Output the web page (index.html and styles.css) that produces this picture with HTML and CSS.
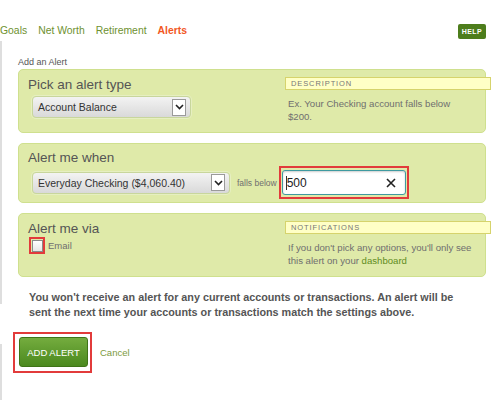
FILE: index.html
```html
<!DOCTYPE html>
<html lang="en">
<head>
    <meta charset="UTF-8">
    <meta name="viewport" content="width=device-width, initial-scale=1.0">
    <title>Alerts</title>
    <link rel="stylesheet" href="styles.css">
</head>
<body>

    <!-- Tabs -->
    <div class="header">
        <nav class="tabs">
            <a href="#">Goals</a>
            <a href="#">Net Worth</a>
            <a href="#">Retirement</a>
            <a href="#" class="active">Alerts</a>
        </nav>
        <a href="#" class="help">HELP</a>
    </div>

    <div class="content">
        <div class="form-title">Add an Alert</div>

        <!-- Pick an alert type -->
        <div class="card">
            <div class="card-main">
                <h2>Pick an alert type</h2>
                <div class="select select-type">
                    <span>Account Balance</span>
                    <span class="arrow">
                        <svg width="9" height="6" viewBox="0 0 9 6"><polyline points="1,1 4.5,4.5 8,1" fill="none" stroke="#222" stroke-width="1.6"/></svg>
                    </span>
                </div>
            </div>
            <div class="card-side">
                <div class="side-label">DESCRIPTION</div>
                <p>Ex. Your Checking account falls below $200.</p>
            </div>
        </div>

        <!-- Alert me when -->
        <div class="card card-when">
            <div class="card-main">
                <h2>Alert me when</h2>
                <div class="when-row">
                    <div class="select select-account">
                        <span>Everyday Checking ($4,060.40)</span>
                        <span class="arrow">
                            <svg width="9" height="6" viewBox="0 0 9 6"><polyline points="1,1 4.5,4.5 8,1" fill="none" stroke="#222" stroke-width="1.6"/></svg>
                        </span>
                    </div>
                    <span class="falls">falls below</span>
                    <div class="highlight input-ring">
                        <div class="amount">
                            <span class="caret"></span><span class="amount-value">500</span>
                            <svg class="clear" width="10" height="10" viewBox="0 0 10 10"><path d="M1 1L9 9M9 1L1 9" stroke="#222" stroke-width="1.6"/></svg>
                        </div>
                    </div>
                </div>
            </div>
        </div>

        <!-- Alert me via -->
        <div class="card">
            <div class="card-main">
                <h2>Alert me via</h2>
                <label class="check-row">
                    <span class="highlight check-ring"><span class="checkbox"></span></span>
                    <span>Email</span>
                </label>
            </div>
            <div class="card-side">
                <div class="side-label">NOTIFICATIONS</div>
                <p>If you don't pick any options, you'll only see this alert on your <a href="#">dashboard</a></p>
            </div>
        </div>

        <p class="notice">You won't receive an alert for any current accounts or transactions. An alert will be sent the next time your accounts or transactions match the settings above.</p>

        <div class="actions">
            <div class="highlight button-ring">
                <button class="btn">ADD ALERT</button>
            </div>
            <a href="#" class="cancel">Cancel</a>
        </div>
    </div>

</body>
</html>
```

FILE: styles.css
```css
/* Colors */
:root {
    --green-link: #6e9130;
    --orange: #f2581f;
    --card-bg: #dfeaa9;
    --card-border: #cfe08e;
    --text: #555555;
    --text-light: #6f6f6f;
    --highlight: #e23b3b;
}

body {
    margin: 0;
    font-family: "Liberation Sans", Arial, sans-serif;
    color: var(--text);
    background:
        linear-gradient(#dedede, #dedede) 0 41px / 2px 263px no-repeat,
        linear-gradient(#dedede, #dedede) 0 344px / 2px 100% no-repeat,
        #ffffff;
}

/* Header */
.header {
    display: flex;
    justify-content: space-between;
    align-items: center;
    height: 16px;
    padding: 23px 14px 0 0;
}

.tabs {
    display: flex;
    gap: 11px;
    font-size: 10.4px;
    margin-top: -2px;
}

.tabs a {
    color: var(--green-link);
    text-decoration: none;
}

.tabs a.active {
    color: var(--orange);
    font-weight: bold;
}

.help {
    background-color: #4d7d1c;
    color: #ffffff;
    font-size: 7px;
    font-weight: bold;
    letter-spacing: 0.4px;
    line-height: 15px;
    padding: 0 4px;
    border-radius: 2px;
    text-decoration: none;
}

/* Form */
.content {
    padding: 18px 14px 0 18px;
}

.form-title {
    font-size: 9px;
    line-height: 11px;
    margin-bottom: 1px;
}

.card {
    display: flex;
    background-color: var(--card-bg);
    border: 1px solid var(--card-border);
    border-radius: 5px;
    padding: 7px 0 9px 9px;
    margin-bottom: 10px;
}

.card-when {
    padding-top: 6px;
    padding-bottom: 3px;
}

.card-main {
    flex: 1;
}

.card h2 {
    margin: 0;
    font-size: 13.5px;
    font-weight: normal;
    line-height: 16px;
    color: var(--text);
}

.card-side {
    width: 200px;
}

.side-label {
    height: 13px;
    box-sizing: border-box;
    margin-right: -6px;
    padding-left: 5px;
    border: 1px solid #d6d36c;
    background-color: #ffffc6;
    font-size: 7.5px;
    line-height: 11px;
    letter-spacing: 0.9px;
    color: #777777;
}

.card-side p {
    margin: 7px 12px 0 3px;
    font-size: 9.6px;
    line-height: 13px;
    color: var(--text-light);
}

.card-side a {
    color: #5f8c22;
    text-decoration: none;
}

/* Fake select */
.select {
    display: flex;
    align-items: center;
    justify-content: space-between;
    box-sizing: border-box;
    height: 22px;
    padding: 0 4px 0 5px;
    border: 1px solid #c8d69c;
    border-radius: 4px;
    box-shadow: 0 0 0 1px #e6efc1;
    background: linear-gradient(#f3f3f3, #d9d9d9);
    font-size: 10.5px;
    color: #333333;
}

.select-type {
    width: 159px;
    margin: 3px 0 0 4px;
}

.select-account {
    width: 198px;
    margin-left: 4px;
}

.arrow {
    display: flex;
    align-items: center;
    justify-content: center;
    width: 14px;
    height: 17px;
    box-sizing: border-box;
    border: 1px solid #9a9a9a;
    background-color: #ffffff;
}

.when-row {
    display: flex;
    align-items: center;
}

.falls {
    margin: 0 2px 0 7px;
    font-size: 8.5px;
    color: var(--text-light);
}

/* Red annotation boxes */
.highlight {
    border: 2px solid var(--highlight);
}

.input-ring {
    padding: 2px 1px;
}

.amount {
    display: flex;
    align-items: center;
    width: 124px;
    height: 25px;
    box-sizing: border-box;
    padding: 0 9px 0 3px;
    border: 1px solid #3e9aa0;
    border-radius: 3px;
    background-color: #ffffff;
    box-shadow: inset 0 1px 2px rgba(0, 0, 0, 0.2);
    font-size: 12px;
    color: #222222;
}

.caret {
    width: 1px;
    height: 14px;
    background-color: #333333;
}

.amount-value {
    flex: 1;
}

.check-row {
    display: flex;
    align-items: center;
    gap: 3px;
    margin-left: 1px;
    font-size: 9.5px;
    color: var(--text-light);
}

.check-ring {
    display: flex;
    align-items: center;
    justify-content: center;
    width: 12px;
    height: 13px;
}

.checkbox {
    width: 9px;
    height: 10px;
    border: 1px solid #8a8a8a;
    background: linear-gradient(#ffffff, #e6e6e6);
}

.notice {
    margin: 13px 0 0 11px;
    max-width: 435px;
    font-size: 10.8px;
    font-weight: bold;
    line-height: 15px;
}

.actions {
    display: flex;
    align-items: center;
    gap: 8px;
    margin: 12px 0 0 -5px;
}

.button-ring {
    padding: 3px 2px 4px 4px;
}

.btn {
    display: block;
    width: 69px;
    height: 30px;
    border: 1px solid #3f7418;
    border-radius: 3px;
    background: linear-gradient(#74ac3e, #4b891f);
    color: #ffffff;
    font-family: inherit;
    font-size: 9.5px;
    cursor: pointer;
}

.cancel {
    font-size: 9.5px;
    color: #7c9a3e;
    text-decoration: none;
}
```
